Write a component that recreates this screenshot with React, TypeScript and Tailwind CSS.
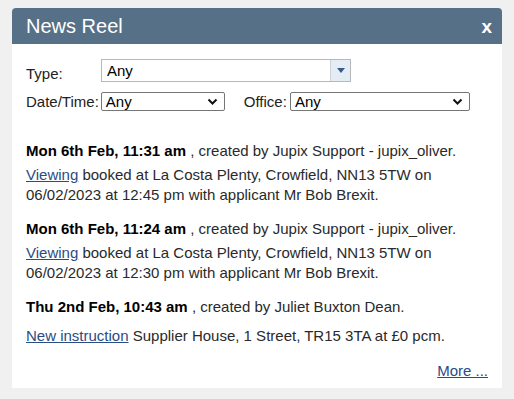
import { useState } from "react";

type Entry = {
  when: string;
  by: string;
  link: string;
  rest: string;
};

const ENTRIES: Entry[] = [
  {
    when: "Mon 6th Feb, 11:31 am",
    by: "Jupix Support - jupix_oliver.",
    link: "Viewing",
    rest: "booked at La Costa Plenty, Crowfield, NN13 5TW on 06/02/2023 at 12:45 pm with applicant Mr Bob Brexit.",
  },
  {
    when: "Mon 6th Feb, 11:24 am",
    by: "Jupix Support - jupix_oliver.",
    link: "Viewing",
    rest: "booked at La Costa Plenty, Crowfield, NN13 5TW on 06/02/2023 at 12:30 pm with applicant Mr Bob Brexit.",
  },
  {
    when: "Thu 2nd Feb, 10:43 am",
    by: "Juliet Buxton Dean.",
    link: "New instruction",
    rest: "Supplier House, 1 Street, TR15 3TA at £0 pcm.",
  },
];

function Chevron() {
  return (
    <svg width="11" height="8" viewBox="0 0 11 8" className="shrink-0">
      <path d="M1.5 1.5 L5.5 5.5 L9.5 1.5" fill="none" stroke="#111" strokeWidth="2" />
    </svg>
  );
}

function NativeSelect({ width }: { width: string }) {
  return (
    <div
      className={`flex h-[19px] items-center justify-between rounded-[2px] border border-[#767676] bg-white pl-[4px] pr-[6px] text-[15px] leading-none text-black ${width}`}
    >
      <span>Any</span>
      <Chevron />
    </div>
  );
}

export default function App() {
  const [open, setOpen] = useState(true);

  return (
    <div
      className="h-[399px] w-[514px] bg-[#f0f0f0] px-3 pt-2"
      style={{ fontFamily: '"Liberation Sans", Arial, sans-serif' }}
    >
      {open && (
        <div className="flex h-[380px] flex-col rounded-t-[4px] bg-white">
          <div className="flex h-9 items-center justify-between rounded-t-[4px] bg-[#557087] pl-[14px] pr-[10px]">
            <span className="text-[20px] text-white">News Reel</span>
            <button
              type="button"
              onClick={() => setOpen(false)}
              className="text-[19px] font-bold leading-none text-white"
            >
              x
            </button>
          </div>

          <div className="flex flex-1 flex-col px-[14px] pt-[15px]">
            <div className="flex items-end text-[15px] leading-[17px] text-[#222]">
              <span className="w-[75px]">Type:</span>
              <div className="flex h-[23px] w-[250px] items-stretch border border-[#b8b8b8] bg-white">
                <span className="flex-1 pl-[5px] pt-[2px] text-[15px] text-black">Any</span>
                <span className="flex w-5 items-center justify-center border-l border-[#d0d0d0] bg-[#e4ecf5]">
                  <svg width="8" height="5" viewBox="0 0 8 5">
                    <path d="M0 0 L8 0 L4 5 Z" fill="#3a5a8c" />
                  </svg>
                </span>
              </div>
            </div>

            <div className="mt-[10px] flex items-center text-[15px] leading-[17px] text-[#222]">
              <span className="mr-[2px]">Date/Time:</span>
              <NativeSelect width="w-[124px]" />
              <span className="ml-[19px] mr-[3px]">Office:</span>
              <NativeSelect width="w-[180px]" />
            </div>

            <div className="mt-[30px] flex flex-col gap-[14px] text-[15px] text-[#2a2a2a]">
              {ENTRIES.map((e, i) => (
                <div key={e.when}>
                  <p className="leading-[20px]">
                    <b className="text-black">{e.when}</b> , created by {e.by}
                  </p>
                  <p className={`${i === 2 ? "mt-[9px]" : "mt-[4px]"} leading-[20px]`}>
                    <a href="#" className="text-[#2b4b85] underline">
                      {e.link}
                    </a>{" "}
                    {e.rest}
                  </p>
                </div>
              ))}
            </div>

            <div className="mt-auto flex justify-end pb-[6px]">
              <a href="#" className="text-[15px] text-[#2b4b85] underline">
                More ...
              </a>
            </div>
          </div>
        </div>
      )}
    </div>
  );
}
